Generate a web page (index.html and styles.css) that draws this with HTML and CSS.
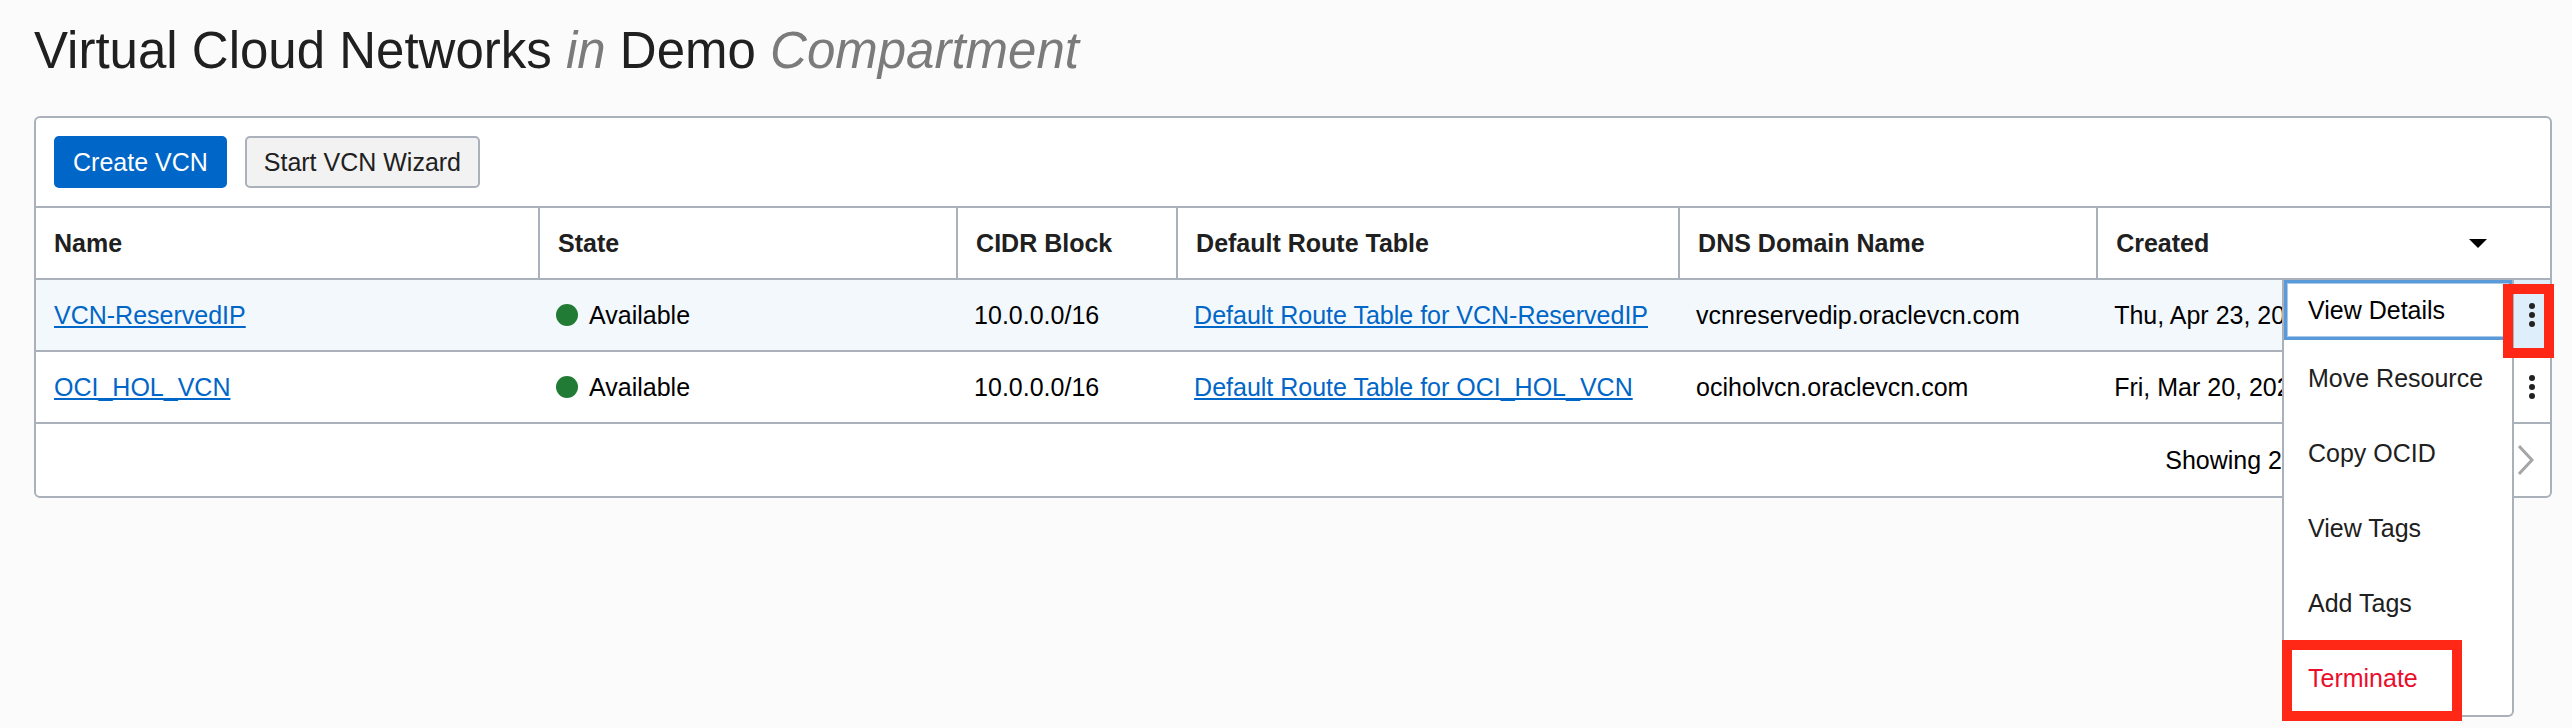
FILE: index.html
```html
<!DOCTYPE html>
<html lang="en">
<head>
<meta charset="utf-8">
<title>Virtual Cloud Networks</title>
<link rel="stylesheet" href="styles.css">
</head>
<body>
<main class="page">
  <h1 class="title">Virtual Cloud Networks <em>in</em> Demo <em>Compartment</em></h1>
  <section class="panel">
    <div class="toolbar">
      <button type="button" class="btn btn-primary">Create VCN</button>
      <button type="button" class="btn">Start VCN Wizard</button>
    </div>
    <table class="grid">
      <colgroup>
        <col class="col-wide"><col class="col-mid"><col class="col-narrow"><col class="col-wide"><col class="col-mid"><col><col class="col-actions">
      </colgroup>
      <thead>
        <tr>
          <th scope="col">Name</th>
          <th scope="col">State</th>
          <th scope="col">CIDR Block</th>
          <th scope="col">Default Route Table</th>
          <th scope="col">DNS Domain Name</th>
          <th scope="col" colspan="2" aria-sort="descending">
            <div class="sortable">Created
              <svg class="sort" viewBox="0 0 18 9" aria-hidden="true"><path d="M0 0H18L9 9Z"/></svg>
            </div>
          </th>
        </tr>
      </thead>
      <tbody>
        <tr class="active">
          <td><a href="#">VCN-ReservedIP</a></td>
          <td><span class="state"><span class="dot"></span>Available</span></td>
          <td>10.0.0.0/16</td>
          <td><a href="#">Default Route Table for VCN-ReservedIP</a></td>
          <td>vcnreservedip.oraclevcn.com</td>
          <td>Thu, Apr 23, 2020</td>
          <td class="actions">
            <button type="button" class="kebab" aria-label="Actions" aria-expanded="true">
              <svg viewBox="0 0 6 24" aria-hidden="true"><circle cx="3" cy="3" r="3"/><circle cx="3" cy="12" r="3"/><circle cx="3" cy="21" r="3"/></svg>
            </button>
            <div class="menu">
              <button type="button" class="item focused">View Details</button>
              <button type="button" class="item">Move Resource</button>
              <button type="button" class="item">Copy OCID</button>
              <button type="button" class="item">View Tags</button>
              <button type="button" class="item">Add Tags</button>
              <button type="button" class="item danger">Terminate</button>
              <span class="callout callout-item"></span>
            </div>
            <span class="callout callout-kebab"></span>
          </td>
        </tr>
        <tr>
          <td><a href="#">OCI_HOL_VCN</a></td>
          <td><span class="state"><span class="dot"></span>Available</span></td>
          <td>10.0.0.0/16</td>
          <td><a href="#">Default Route Table for OCI_HOL_VCN</a></td>
          <td>ociholvcn.oraclevcn.com</td>
          <td>Fri, Mar 20, 2020</td>
          <td class="actions">
            <button type="button" class="kebab" aria-label="Actions">
              <svg viewBox="0 0 6 24" aria-hidden="true"><circle cx="3" cy="3" r="3"/><circle cx="3" cy="12" r="3"/><circle cx="3" cy="21" r="3"/></svg>
            </button>
          </td>
        </tr>
      </tbody>
    </table>
    <footer class="pager">
      <span class="count">Showing 2</span>
      <button type="button" class="next" aria-label="Next page">
        <svg viewBox="0 0 16 30" aria-hidden="true"><path d="M1 1L14 15L1 29"/></svg>
      </button>
    </footer>
  </section>
</main>
</body>
</html>
```
FILE: styles.css
```css
:root {
  --line: #abb1bb;
  --blue: #0066c7;
  --ink: #202020;
  --callout: #ff2715;
}

* { box-sizing: border-box; }

html { background: #fbfbfb; }

body {
  margin: 0;
  min-height: 100vh;
  color: #000;
  font: 25px/32px "Liberation Sans", Arial, sans-serif;
}

button {
  font: inherit;
  color: inherit;
  margin: 0;
  cursor: pointer;
}

.page {
  min-height: 100vh;
  padding: 20px 20px 0 34px;
}

.title {
  margin: 0 0 34px;
  font-size: 51px;
  line-height: 62px;
  font-weight: 400;
  color: var(--ink);
}

.title em { color: #7b7b7b; }

.panel {
  background: #fff;
  border: 2px solid var(--line);
  border-radius: 6px;
}

.toolbar {
  display: flex;
  gap: 18px;
  padding: 18px;
}

.btn {
  height: 52px;
  padding: 0 17px;
  border: 2px solid var(--line);
  border-radius: 5px;
  background: #f2f2f2;
  color: var(--ink);
}

.btn-primary {
  background: var(--blue);
  border-color: var(--blue);
  color: #fff;
}

.grid {
  width: 100%;
  table-layout: fixed;
  border-spacing: 0;
}

.col-wide { width: 19.97%; }
.col-mid { width: 16.63%; }
.col-narrow { width: 8.75%; }
.col-actions { width: 36px; }

.grid th,
.grid td {
  height: 72px;
  padding: 0 18px;
  border-top: 2px solid var(--line);
  text-align: left;
  white-space: nowrap;
}

.grid th {
  color: var(--ink);
  font-weight: 700;
}

.grid th + th { border-left: 2px solid var(--line); }

.sortable {
  display: flex;
  align-items: center;
  justify-content: space-between;
  padding-right: 45px;
}

.sort {
  width: 18px;
  height: 9px;
}

.active td { background: #f3f8fc; }

.grid a {
  color: var(--blue);
  text-decoration: underline;
  text-decoration-thickness: 2px;
  text-underline-offset: 2px;
  text-decoration-skip-ink: none;
}

.state {
  display: flex;
  align-items: center;
  gap: 11px;
}

.dot {
  width: 22px;
  height: 22px;
  border-radius: 50%;
  background: #217b34;
}

.grid .actions {
  position: relative;
  padding: 0;
}

.grid .active .actions { background: #deeefa; }

.kebab {
  display: flex;
  align-items: center;
  justify-content: center;
  width: 100%;
  height: 70px;
  padding: 0;
  border: 0;
  background: none;
}

.kebab svg {
  width: 6px;
  height: 24px;
  fill: #222;
}

.menu {
  position: absolute;
  z-index: 1;
  top: 0;
  right: 100%;
  display: flex;
  flex-direction: column;
  width: 232px;
  border: 2px solid var(--line);
  border-top: 0;
  border-radius: 0 0 6px 6px;
  background: #fff;
}

.item {
  height: 75px;
  padding: 0 24px;
  border: 0;
  background: none;
  color: var(--ink);
  text-align: left;
  white-space: nowrap;
}

.item.focused {
  height: 60px;
  padding: 0 21px;
  border: 3px solid #5b9ad9;
  box-shadow: inset 0 0 0 1px #a9c9ea;
  color: #000;
}

.item.danger { color: #ea0d2c; }

.callout {
  position: absolute;
  z-index: 2;
  border: 10px solid var(--callout);
  pointer-events: none;
}

.callout-kebab {
  inset: 4px -4px -8px -11px;
}

.callout-item {
  left: -2px;
  bottom: -6px;
  width: 180px;
  height: 81px;
}

.pager {
  display: flex;
  align-items: center;
  justify-content: flex-end;
  gap: 236px;
  height: 74px;
  padding-right: 16px;
  border-top: 2px solid var(--line);
}

.next {
  display: flex;
  padding: 0;
  border: 0;
  background: none;
}

.next svg {
  width: 16px;
  height: 30px;
  fill: none;
  stroke: #a6a6a6;
  stroke-width: 3;
}
```
